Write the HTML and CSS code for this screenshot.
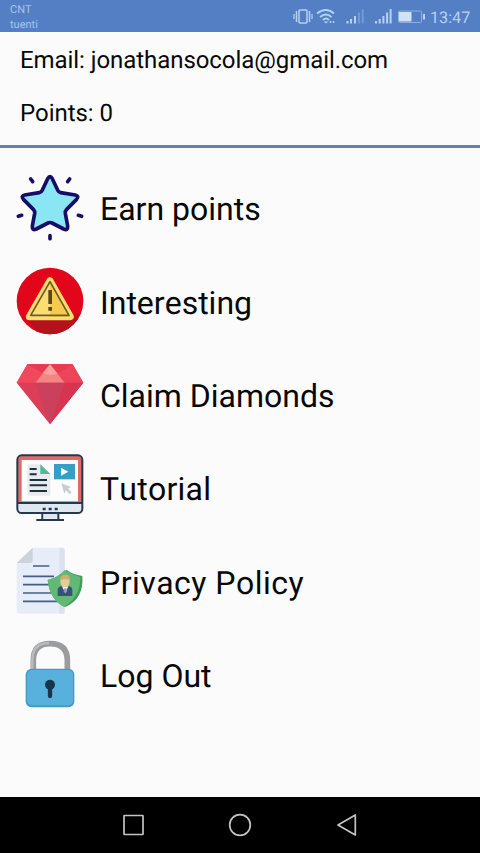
FILE: index.html
```
<!DOCTYPE html>
<html lang="en">
<head>
<meta charset="utf-8">
<title>Menu</title>
<link rel="stylesheet" href="styles.css">
</head>
<body>
<header class="status">
  <div class="carriers"><span>CNT</span><span>tuenti</span></div>
  <svg class="status-icons" viewBox="0 0 140 32" width="140" height="32">
    <g fill="none" stroke="#b5d2f5" stroke-width="1.5">
      <rect x="9" y="10" width="8" height="13" rx="1"/>
      <path d="M6.500 11v11M19.500 11v11"/>
      <path d="M4 14v5M22 14v5" stroke-width="1.200"/>
      <path d="M37 13.500q9-7 17 0M40 17q6-5 11.500 0M43 20q3-3 6 0" stroke-width="1.900" transform="translate(-10 0)"/>
    </g>
    <path d="M33.500 21.500h5l-2.500 2z" fill="#b5d2f5"/>
    <path d="M40.500 21v2M43.500 21v2" stroke="#b5d2f5" stroke-width="1.500"/>
    <path d="M57.500 21v2.500M61 19v4.500M65 16v7.500" stroke="#b5d2f5" stroke-width="2"/>
    <path d="M69 12.500v11M72.700 9.500v14" stroke="#7599d3" stroke-width="2"/>
    <path d="M86 21v2.500M89.700 19v4.500M93.400 16v7.500M97.100 12.500v11M100.600 9v14.500" stroke="#b5d2f5" stroke-width="2"/>
    <rect x="108.500" y="11" width="23" height="11.500" rx="1" fill="none" stroke="#8fb1e2"/>
    <path d="M109 12h12.500v9.500H109z" fill="#cfe2fa"/>
    <path d="M134 14v5.500" stroke="#b5d2f5" stroke-width="2"/>
  </svg>
  <span class="clock">13:47</span>
</header>
<section class="account">
  <p>Email: jonathansocola@gmail.com</p>
  <p>Points: 0</p>
</section>
<main class="menu">
  <div class="item">
    <svg class="icon" viewBox="0 0 240 240">
      <path d="M113 32Q120 20 127 32L144 68Q146 73 152 74L196 81Q209 84 199 95L170 124Q165 129 166 136L173 174Q174 189 161 183L126 165Q120 162 114 165L79 183Q66 189 67 174L74 136Q75 129 70 124L41 95Q31 84 44 81L88 74Q94 73 96 68Z" fill="#8be6f4" stroke="#160d69" stroke-width="11" stroke-linejoin="round"/>
      <path d="M62 33l6 8M179 33l-6 8M25 145l10-3M215 145l-10-3M120 203v9" stroke="#160d69" stroke-width="11" stroke-linecap="round"/>
    </svg><span>Earn points</span>
  </div>
  <div class="item">
    <svg class="icon" viewBox="0 0 240 240">
      <circle cx="120" cy="120" r="100" fill="#e2061b"/>
      <path d="M187 165L213 155A100 100 0 0 1 78 211L50 172Z" fill="#b5121b"/>
      <path d="M120 59L181 167H58Z" fill="#ffdc6f" stroke="#ffdc6f" stroke-width="21" stroke-linejoin="round"/>
      <path d="M120 59L181 167H120Z" fill="#f7c94e"/>
      <path d="M120 62L177 163H62Z" fill="none" stroke="#695c2b" stroke-width="5" stroke-linejoin="round"/>
      <path d="M115 87h11v42h-11zM115 138h11v11h-11z" fill="#514721"/>
    </svg><span>Interesting</span>
  </div>
  <div class="item">
    <svg class="icon" viewBox="0 0 240 240">
      <path d="M52 28H188L220 83L120 208L20 83Z" fill="#dc3d57"/>
      <path d="M52 28H120L76 83H20Z" fill="#f1495b"/>
      <path d="M120 28H188L220 83H164Z" fill="#ee4459"/>
      <path d="M52 28H120L98 55Z" fill="#e93b50"/>
      <path d="M120 28H188L143 56Z" fill="#e93b50"/>
      <path d="M120 28L164 83H76Z" fill="#f58583"/>
      <path d="M120 28L143 56L120 60L98 55Z" fill="#f9a19c"/>
      <path d="M76 83H164L120 208Z" fill="#cb405d"/>
      <path d="M164 83H220L120 208Z" fill="#d63450"/>
    </svg><span>Claim Diamonds</span>
  </div>
  <div class="item tutorial">
    <svg class="icon" viewBox="0 0 240 240">
      <rect x="22" y="22" width="195" height="173" rx="13" fill="#df6b68"/>
      <path d="M35 36H204V160H35Z" fill="#fcfcfc"/>
      <path d="M22 165H217V184Q217 195 205 195H34Q22 195 22 184Z" fill="#dfe8f0"/>
      <path d="M22 165H217" stroke="#26384d" stroke-width="6"/>
      <rect x="22" y="22" width="195" height="173" rx="13" fill="none" stroke="#26384d" stroke-width="6"/>
      <path d="M52 49H91L121 78V143H52Z" fill="#e8ebee"/>
      <path d="M91 49L121 78H91Z" fill="#52b898"/>
      <path d="M59 63h21M59 79h21M59 96h52M59 112h52M59 129h52" stroke="#1d3042" stroke-width="6"/>
      <path d="M132 48H195V94H132Z" fill="#359fc5"/>
      <path d="M153 59L175 71L153 83Z" fill="#fff"/>
      <path d="M154 106L183 117L174 122L185 133L179 139L168 127L163 137Z" fill="#c8cdd1"/>
      <path d="M97 198V215M145 198V215M79 216H162" fill="none" stroke="#26384d" stroke-width="6"/>
      <path d="M101 198H141V212H101Z" fill="#dfe8f0"/>
      <path d="M98 183h9M116 183h9M134 183h9" stroke="#26384d" stroke-width="7"/>
    </svg><span>Tutorial</span>
  </div>
  <div class="item privacy">
    <svg class="icon" viewBox="0 0 240 240">
      <path d="M68 20H158Q164 20 164 26V212Q164 218 158 218H27Q20 218 20 211V66Z" fill="#e7edf8"/>
      <path d="M148 20h10q6 0 6 6v186q0 6-6 6h-10z" fill="#dbe2ef"/>
      <path d="M68 20V58Q68 66 60 66H20Z" fill="#cdd2dc"/>
      <path d="M69 75H118M39 106H132M39 131H120M39 156H126M39 181H142" stroke="#465d87" stroke-width="5"/>
      <path d="M169 86Q187 100 217 105Q222 175 165 198Q119 177 113 117Q148 108 169 86Z" fill="#3f9c5c"/>
      <path d="M164 87Q184 101 211 108Q212 168 161 197Q119 175 113 117Q146 108 164 87Z" fill="#62b975"/>
      <path d="M143 165V148Q143 136 156 136H175Q187 136 187 148V165Z" fill="#37517a"/>
      <path d="M156 136H175L166 157Z" fill="#f5f7fb"/>
      <path d="M163 142h6l2 10-5 5-5-5z" fill="#8f9bb0"/>
      <ellipse cx="165" cy="121" rx="14" ry="18" fill="#e8cb94"/>
      <path d="M151 118Q149 101 166 101Q182 101 180 118Q170 110 151 118Z" fill="#cfae72"/>
    </svg><span>Privacy Policy</span>
  </div>
  <div class="item">
    <svg class="icon" viewBox="0 0 240 240">
      <path d="M70 106V76Q70 26 120 26Q172 26 172 76V106" fill="none" stroke="#9b9c9e" stroke-width="17"/>
      <path d="M67 106V76Q67 24 117 24" fill="none" stroke="#bbb" stroke-width="7"/>
      <rect x="47" y="101" width="146" height="116" rx="18" fill="#3f9dc6"/>
      <rect x="51" y="105" width="138" height="106" rx="15" fill="#58b0dc"/>
      <circle cx="120" cy="149" r="15" fill="#17364c"/>
      <path d="M120 153V183" stroke="#17364c" stroke-width="13" stroke-linecap="round"/>
    </svg><span>Log Out</span>
  </div>
</main>
<nav class="nav">
  <svg viewBox="0 0 280 56" width="280" height="56" fill="none" stroke="#c4c4c4" stroke-width="1.700" stroke-linejoin="round">
    <rect x="24" y="18.500" width="19" height="19" rx=".5"/>
    <circle cx="140" cy="28" r="10.300"/>
    <path d="M255.300 18v20L238 28Z"/>
  </svg>
</nav>
</body>
</html>
```

FILE: styles.css
```
body {
  margin: 0;
  height: 853px;
  display: flex;
  flex-direction: column;
  overflow: hidden;
  background: #fbfbfb;
  color: #080808;
  font-family: Roboto, sans-serif;
  text-rendering: geometricPrecision;
  font-kerning: none;
}
.status {
  height: 32px;
  display: flex;
  align-items: center;
  background: #557fc4;
  color: #b5d2f5;
}
.carriers {
  width: 280px;
  padding-left: 10px;
  display: flex;
  flex-direction: column;
  font-size: 11px;
  line-height: 15px;
  padding-top: 2px;
  color: #a3c4ef;
}
.clock {
  font-size: 16.2px;
  padding-top: 2px;
}
.account {
  box-sizing: border-box;
  height: 116px;
  padding: 10px 20px 0;
  border-bottom: 3px solid #5c84ae;
}
.account p {
  margin: 0 0 17px;
  font-size: 24px;
  line-height: 36px;
  letter-spacing: -0.06px;
}
.menu {
  flex: 1;
  padding-top: 13.33px;
}
.item {
  height: 93.33px;
  display: flex;
  align-items: center;
  gap: 10px;
  padding-left: 10px;
  font-size: 32px;
  white-space: nowrap;
}
.item span {
  padding-top: 3px;
}
.tutorial {
  letter-spacing: 0.25px;
}
.privacy {
  letter-spacing: 0.47px;
}
.icon {
  width: 80px;
  height: 80px;
  flex: none;
}
.nav {
  height: 56px;
  display: flex;
  justify-content: center;
  background: #000;
}
```
